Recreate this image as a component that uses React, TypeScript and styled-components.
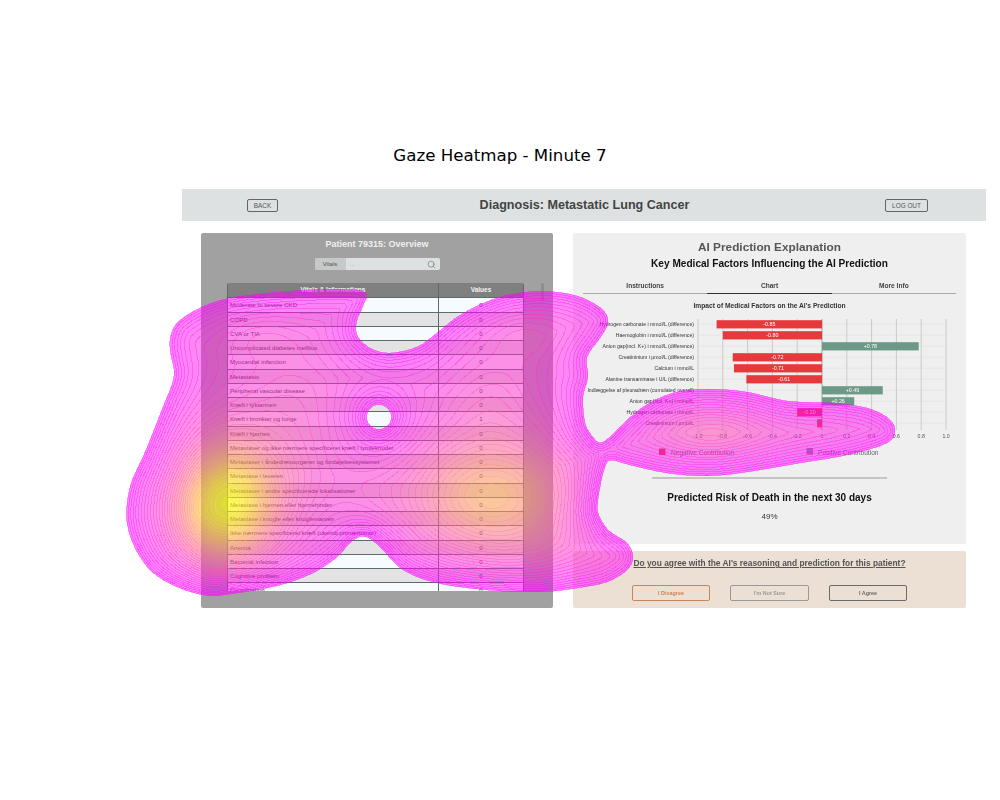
import React, { useMemo } from "react";
import styled, { createGlobalStyle } from "styled-components";
import { Search } from "lucide-react";

const Global = createGlobalStyle`
  html, body { margin: 0; padding: 0; background: #fff; }
  body { font-family: "Liberation Sans", Arial, sans-serif; }
`;

const Page = styled.div`
  position: relative;
  width: 1000px;
  height: 800px;
  overflow: hidden;
  background: #fff;
`;
const FigureTitle = styled.h1`
  margin: 0;
  padding-top: 145px;
  height: 44px;
  box-sizing: content-box;
  line-height: 22px;
  text-align: center;
  font: 400 16.67px/22px "DejaVu Sans", sans-serif;
  color: #000;
`;
const Shot = styled.div`
  margin-left: 182px;
  width: 804px;
  filter: blur(0.45px);
`;
const TopBar = styled.header`
  height: 32px;
  background: #dde1e1;
  display: grid;
  grid-template-columns: 65px 31px 1fr 43px 58px;
  align-items: center;
`;
const BarButton = styled.button<{ $col: number }>`
  grid-column: ${(p) => p.$col};
  height: 13px;
  padding: 0;
  border: 1px solid #666;
  border-radius: 2px;
  background: transparent;
  color: #555;
  font: 400 6.4px "Liberation Sans", sans-serif;
`;
const Diagnosis = styled.h2`
  grid-column: 3;
  margin: 0;
  padding-left: 6px;
  text-align: center;
  font: 700 12.6px "Liberation Sans", sans-serif;
  color: #444;
`;
const Body = styled.div`
  display: flex;
  gap: 20px;
  padding: 12px 20px 0 19px;
`;
const LeftPanel = styled.section`
  width: 352px;
  height: 375px;
  box-sizing: border-box;
  padding-top: 5px;
  background: #a1a1a1;
  border-radius: 2px;
`;
const PatientTitle = styled.h3`
  margin: 0;
  text-align: center;
  font: 700 9px/12px "Liberation Sans", sans-serif;
  color: #efefef;
`;
const SearchBox = styled.div`
  margin: 8px auto 0;
  width: 125px;
  height: 12px;
  display: flex;
  border-radius: 2px;
  overflow: hidden;
  background: #dde0e0;
`;
const SearchLabel = styled.span`
  width: 31px;
  background: #c6c9c9;
  text-align: center;
  color: #555;
  font: 400 6px/12px "Liberation Sans", sans-serif;
`;
const SearchField = styled.span`
  flex: 1;
  display: flex;
  align-items: center;
  justify-content: space-between;
  padding: 0 4px;
  color: #999;
  font: 400 6px/12px "Liberation Sans", sans-serif;
  svg { color: #666; }
`;
const TableArea = styled.div`
  display: flex;
  gap: 17px;
  margin: 13px 0 0 26px;
`;
const Table = styled.div`
  width: 297px;
  height: 308px;
  box-sizing: border-box;
  overflow: hidden;
  border-left: 1px solid #5d6b6b;
  border-right: 1px solid #5d6b6b;
  border-radius: 2px 2px 0 0;
`;
const Row = styled.div<{ $kind: "head" | "odd" | "even" }>`
  display: grid;
  grid-template-columns: 210px 85px;
  height: ${(p) => (p.$kind === "head" ? "15.3px" : "14.25px")};
  box-sizing: border-box;
  border-bottom: 1px solid #5d6b6b;
  background: ${(p) => (p.$kind === "head" ? "#808080" : p.$kind === "odd" ? "#f6fbff" : "#e3e3e3")};
  color: ${(p) => (p.$kind === "head" ? "#f4f4f4" : "#333")};
  font: ${(p) => (p.$kind === "head" ? "700 6.5px/14.3px" : "400 6.1px/13.25px")} "Liberation Sans", sans-serif;
`;
const NameCell = styled.div<{ $center?: boolean }>`
  padding-left: ${(p) => (p.$center ? 0 : "2px")};
  text-align: ${(p) => (p.$center ? "center" : "left")};
  white-space: nowrap;
  overflow: hidden;
`;
const ValueCell = styled.div`
  text-align: center;
  border-left: 1px solid #5d6b6b;
`;
const Thumb = styled.div`
  width: 3px;
  height: 18px;
  background: #8e8e8e;
  border-radius: 1px;
`;
const RightColumn = styled.div`
  width: 393px;
  display: flex;
  flex-direction: column;
  gap: 7px;
`;
const ExplainPanel = styled.section`
  height: 311px;
  box-sizing: border-box;
  padding-top: 6px;
  background: #efefef;
  border-radius: 2px;
  text-align: center;
`;
const ExplainTitle = styled.h3`
  margin: 0;
  font: 700 11.8px/16px "Liberation Sans", sans-serif;
  color: #555;
`;
const ExplainSub = styled.h4`
  margin: 2px 0 0;
  font: 700 10.1px/14px "Liberation Sans", sans-serif;
  color: #111;
`;
const Tabs = styled.div`
  margin: 7px 10px 0;
  display: grid;
  grid-template-columns: repeat(3, 1fr);
  border-bottom: 1px solid #a8a8a8;
`;
const Tab = styled.div<{ $active?: boolean }>`
  height: 15px;
  margin-bottom: -1px;
  box-sizing: content-box;
  border-bottom: 1px solid ${(p) => (p.$active ? "#333" : "transparent")};
  font: 700 6.6px/15px "Liberation Sans", sans-serif;
  color: #444;
`;
const ChartTitle = styled.div`
  margin-top: 7px;
  font: 700 6.7px/10px "Liberation Sans", sans-serif;
  color: #333;
`;
const ChartSvg = styled.svg`
  display: block;
  margin-top: 3px;
  font-family: "Liberation Sans", sans-serif;
`;
const Divider = styled.hr`
  width: 235px;
  height: 1.5px;
  margin: 13px auto 0;
  border: 0;
  background: #c4c4c4;
`;
const RiskTitle = styled.div`
  margin-top: 12px;
  font: 700 10px/13px "Liberation Sans", sans-serif;
  color: #111;
`;
const RiskValue = styled.div`
  margin-top: 7px;
  font: 400 8px/11px "Liberation Sans", sans-serif;
  color: #333;
`;
const AgreePanel = styled.section`
  height: 57px;
  box-sizing: border-box;
  padding-top: 6px;
  background: #ecdfd3;
  border-radius: 2px;
  text-align: center;
`;
const Question = styled.div`
  font: 700 8.4px/13px "Liberation Sans", sans-serif;
  color: #555;
  text-decoration: underline;
`;
const ChoiceRow = styled.div`
  margin-top: 15px;
  display: flex;
  justify-content: center;
  gap: 20px;
`;
const Choice = styled.button<{ $tone: string }>`
  width: 78.5px;
  height: 15.5px;
  padding: 0;
  background: transparent;
  border: 1px solid ${(p) => p.$tone};
  border-radius: 2px;
  color: ${(p) => p.$tone};
  font: 700 5.4px "Liberation Sans", sans-serif;
`;
const Overlay = styled.svg`
  position: absolute;
  left: 0;
  top: 0;
  pointer-events: none;
`;

const ROWS: [string, string][] = [
  ["Moderate to severe CKD", "0"],
  ["COPD", "0"],
  ["CVA or TIA", "0"],
  ["Uncomplicated diabetes mellitus", "0"],
  ["Myocardial infarction", "0"],
  ["Metastasis", "0"],
  ["Peripheral vascular disease", "0"],
  ["Kræft i tyktarmen", "0"],
  ["Kræft i bronkier og lunge", "1"],
  ["Kræft i hjernen", "0"],
  ["Metastaser og ikke nærmere specificeret kræft i lymfeknuder", "0"],
  ["Metastaser i åndedrætsorganer og fordøjelsessystemet", "0"],
  ["Metastase i leveren", "0"],
  ["Metastaser i andre specificerede lokalisationer", "0"],
  ["Metastase i hjernen eller hjernehinder", "0"],
  ["Metastase i knogle eller knoglemarven", "0"],
  ["Ikke nærmere specificeret kræft (ukendt primærtumor)", "0"],
  ["Anemia", "0"],
  ["Bacterial infection", "0"],
  ["Cognitive problem", "0"],
  ["Coordination", "0"],
];

const BARS: [string, number][] = [
  ["Hydrogen carbonate i mmol/L (difference)", -0.85],
  ["Haemoglobin i mmol/L (difference)", -0.8],
  ["Anion gap(incl. K+) i mmol/L (difference)", 0.78],
  ["Creatininium i µmol/L (difference)", -0.72],
  ["Calcium i mmol/L", -0.71],
  ["Alanine transaminase i U/L (difference)", -0.61],
  ["Indlæggelse af pleuradræn (cumulated overall)", 0.49],
  ["Anion gap(incl. K+) i mmol/L", 0.26],
  ["Hydrogen carbonate i mmol/L", -0.2],
  ["Creatininium i µmol/L", -0.04],
];
const TICKS = [-1, -0.8, -0.6, -0.4, -0.2, 0, 0.2, 0.4, 0.6, 0.8, 1];

function Chart() {
  const zero = 249;
  const unit = 124;
  const rowY = (i: number) => 10.3 + 11 * i;
  return (
    <ChartSvg width={393} height={150} viewBox="0 0 393 150">
      {BARS.map((_, i) => (
        <line key={i} x1={zero - unit} x2={zero + unit} y1={rowY(i)} y2={rowY(i)} stroke="#e4e4e2" strokeWidth={0.8} />
      ))}
      {TICKS.map((t) => (
        <line
          key={t}
          x1={zero + t * unit}
          x2={zero + t * unit}
          y1={5}
          y2={116}
          stroke={t === 0 ? "#8fa59a" : "#cbcbc4"}
          strokeWidth={1}
        />
      ))}
      {BARS.map(([name, v], i) => {
        const w = Math.abs(v) * unit;
        const x = v < 0 ? zero - w : zero;
        const label = (v > 0 ? "+" : "") + v.toFixed(2);
        return (
          <g key={name}>
            <text x={121} y={rowY(i) + 1.9} textAnchor="end" fontSize={5.15} fill="#333">{name}</text>
            <rect x={x} y={rowY(i) - 4.1} width={w} height={8.2} fill={v < 0 ? "#e6393c" : "#6d9a86"} />
            {Math.abs(v) > 0.1 && (
              <text x={x + w / 2} y={rowY(i) + 1.9} textAnchor="middle" fontSize={5.3} fill="#fff">{label}</text>
            )}
          </g>
        );
      })}
      {TICKS.map((t) => (
        <text key={t} x={zero + t * unit} y={123.5} textAnchor="middle" fontSize={5.2} fill="#555">
          {t === 0 ? "0" : t.toFixed(1)}
        </text>
      ))}
      <rect x={86} y={134.5} width={6.5} height={6.5} fill="#e6393c" />
      <text x={98} y={140.5} fontSize={6.6} fill="#666">Negative Contribution</text>
      <rect x={233.5} y={134} width={6.5} height={6.5} fill="#6d9a86" />
      <text x={245} y={140.5} fontSize={6.6} fill="#666">Positive Contribution</text>
    </ChartSvg>
  );
}

/* ---------- gaze density ---------- */
type P = [number, number];
const OUTER: P[] = [
  [333, 289], [365, 292], [363, 306], [357, 320], [357, 335], [370, 348], [390, 353], [417, 347], [437, 333],
  [453, 320], [473, 308], [500, 297], [527, 292], [557, 292], [583, 298], [603, 310], [608, 323], [600, 338],
  [587, 357], [588, 377], [583, 397], [585, 423], [592, 436], [600, 443], [610, 437], [620, 427], [643, 407],
  [673, 393], [707, 389], [747, 392], [787, 401], [833, 403], [867, 408], [888, 418], [895, 430], [887, 443],
  [847, 455], [800, 463], [747, 472], [707, 476], [667, 473], [630, 465], [610, 460], [604, 470], [600, 487],
  [598, 500], [598, 513], [608, 530], [627, 543], [633, 557], [627, 570], [607, 582], [577, 588], [540, 592],
  [487, 590], [437, 583], [403, 570], [383, 550], [367, 537], [353, 540], [337, 557], [313, 573], [280, 585],
  [237, 593], [203, 595], [163, 580], [140, 557], [127, 523], [130, 487], [143, 457], [150, 440], [163, 407],
  [174, 377], [171, 355], [170, 340], [177, 323], [200, 308], [230, 298], [280, 292],
];
const HOLE: P[] = Array.from({ length: 20 }, (_, i) => {
  const a = (i / 20) * Math.PI * 2;
  return [379 + 12.5 * Math.cos(a), 417 + 12.5 * Math.sin(a)] as P;
});
const BLOBS: [number, number, number, number, number][] = [
  [228, 505, 36, 48, 0.7],
  [290, 480, 40, 40, 0.1],
  [188, 512, 24, 38, 0.08],
  [492, 497, 62, 46, 0.5],
  [370, 510, 26, 22, 0.06],
  [262, 335, 30, 18, 0.08],
  [525, 332, 36, 20, 0.1],
  [300, 400, 40, 40, 0.1],
  [490, 395, 32, 30, 0.1],
  [710, 432, 42, 20, 0.22],
  [805, 430, 45, 14, 0.06],
  [535, 555, 40, 22, 0.04],
];

function smooth(pts: P[], n: number): P[] {
  const out: P[] = [];
  const N = pts.length;
  for (let i = 0; i < N; i++) {
    const [p0, p1, p2, p3] = [pts[(i - 1 + N) % N], pts[i], pts[(i + 1) % N], pts[(i + 2) % N]];
    for (let k = 0; k < n; k++) {
      const t = k / n;
      const t2 = t * t;
      const t3 = t2 * t;
      const q = (a: number, b: number, c: number, d: number) =>
        0.5 * (2 * b + (c - a) * t + (2 * a - 5 * b + 4 * c - d) * t2 + (3 * b - a - 3 * c + d) * t3);
      out.push([q(p0[0], p1[0], p2[0], p3[0]), q(p0[1], p1[1], p2[1], p3[1])]);
    }
  }
  return out;
}

const X0 = 114;
const Y0 = 279;
const CELL = 3;
const NX = 265;
const NY = 110;

function buildField(loops: P[][]) {
  const segs: number[] = [];
  loops.forEach((l) =>
    l.forEach((p, i) => {
      const q = l[(i + 1) % l.length];
      segs.push(p[0], p[1], q[0], q[1]);
    })
  );
  const f = new Float32Array((NX + 1) * (NY + 1));
  for (let j = 0; j <= NY; j++) {
    const y = Y0 + j * CELL;
    for (let i = 0; i <= NX; i++) {
      const x = X0 + i * CELL;
      let best = 1e12;
      let inside = false;
      for (let s = 0; s < segs.length; s += 4) {
        const ax = segs[s], ay = segs[s + 1], bx = segs[s + 2], by = segs[s + 3];
        const dx = bx - ax, dy = by - ay;
        let t = ((x - ax) * dx + (y - ay) * dy) / (dx * dx + dy * dy || 1);
        t = t < 0 ? 0 : t > 1 ? 1 : t;
        const ex = x - ax - t * dx, ey = y - ay - t * dy;
        const d = ex * ex + ey * ey;
        if (d < best) best = d;
        if (ay > y !== by > y && x < ax + ((y - ay) / (by - ay)) * dx) inside = !inside;
      }
      const dist = Math.sqrt(best) * (inside ? 1 : -1);
      let g = 0.25;
      for (const [cx, cy, sx, sy, amp] of BLOBS) {
        const u = (x - cx) / sx, v = (y - cy) / sy;
        g += amp * Math.exp(-0.5 * (u * u + v * v));
      }
      f[j * (NX + 1) + i] = (1 - Math.exp(-Math.max(dist, -40) / 18)) * g;
    }
  }
  return f;
}

function trace(f: Float32Array, L: number) {
  let fill = "";
  let line = "";
  const W = NX + 1;
  const n = (v: number) => +v.toFixed(1);
  for (let j = 0; j < NY; j++) {
    let run = -1;
    for (let i = 0; i <= NX; i++) {
      const full =
        i < NX && f[j * W + i] >= L && f[j * W + i + 1] >= L && f[(j + 1) * W + i] >= L && f[(j + 1) * W + i + 1] >= L;
      if (full) {
        if (run < 0) run = i;
        continue;
      }
      if (run >= 0) {
        const xa = X0 + run * CELL, xb = X0 + i * CELL, ya = Y0 + j * CELL;
        fill += `M${xa} ${ya}H${xb}V${ya + CELL}H${xa}Z`;
        run = -1;
      }
      if (i === NX) continue;
      const vals = [f[j * W + i], f[j * W + i + 1], f[(j + 1) * W + i + 1], f[(j + 1) * W + i]];
      if (vals.every((v) => v < L)) continue;
      const cx = [i, i + 1, i + 1, i];
      const cy = [j, j, j + 1, j + 1];
      const poly: string[] = [];
      const cross: string[] = [];
      for (let k = 0; k < 4; k++) {
        const a = vals[k], b = vals[(k + 1) % 4];
        const px = X0 + cx[k] * CELL, py = Y0 + cy[k] * CELL;
        if (a >= L) poly.push(px + " " + py);
        if (a >= L !== b >= L) {
          const t = (L - a) / (b - a);
          const qx = X0 + cx[(k + 1) % 4] * CELL, qy = Y0 + cy[(k + 1) % 4] * CELL;
          const s = n(px + (qx - px) * t) + " " + n(py + (qy - py) * t);
          poly.push(s);
          cross.push(s);
        }
      }
      fill += "M" + poly.join("L") + "Z";
      for (let c = 0; c + 1 < cross.length; c += 2) line += "M" + cross[c] + "L" + cross[c + 1];
    }
  }
  return { fill, line };
}

const heat = (L: number) => Math.min(1, Math.pow(Math.max(L, 0), 1.5));
const spring = (t: number, a: number) =>
  `rgba(255,${Math.round(255 * t)},${Math.round(255 * (1 - t))},${a.toFixed(3)})`;

function GazeOverlay() {
  const data = useMemo(() => {
    const f = buildField([smooth(OUTER, 4), HOLE]);
    const STEP = 0.028;
    const traces: { L: number; fill: string; line: string }[] = [];
    for (let L = 0.001; L < 1.2; L += STEP) traces.push({ L, ...trace(f, L) });
    const bands = traces.map((t, i) => {
      const next = traces[i + 1];
      const h = heat(t.L + STEP / 2);
      return { d: t.fill + (next ? next.fill : ""), c: spring(h, 0.5 + 0.14 * h) };
    });
    const lines = traces.map((t) => ({ d: t.line, c: spring(heat(t.L), 0.38) }));
    return { bands, lines };
  }, []);
  return (
    <Overlay width={1000} height={800} viewBox="0 0 1000 800">
      {data.bands.map((l, i) => (
        <path key={i} d={l.d} fill={l.c} fillRule="evenodd" />
      ))}
      {data.lines.map((l, i) => (
        <path key={i} d={l.d} fill="none" stroke={l.c} strokeWidth={1} shapeRendering="crispEdges" />
      ))}
    </Overlay>
  );
}

export default function App() {
  return (
    <Page>
      <Global />
      <FigureTitle>Gaze Heatmap - Minute 7</FigureTitle>
      <Shot>
        <TopBar>
          <BarButton $col={2}>BACK</BarButton>
          <Diagnosis>Diagnosis: Metastatic Lung Cancer</Diagnosis>
          <BarButton $col={4}>LOG OUT</BarButton>
        </TopBar>
        <Body>
          <LeftPanel>
            <PatientTitle>Patient 79315: Overview</PatientTitle>
            <SearchBox>
              <SearchLabel>Vitals</SearchLabel>
              <SearchField>
                ...
                <Search size={9} strokeWidth={1.5} />
              </SearchField>
            </SearchBox>
            <TableArea>
              <Table>
                <Row $kind="head">
                  <NameCell $center>Vitals &amp; Informations</NameCell>
                  <ValueCell>Values</ValueCell>
                </Row>
                {ROWS.map(([name, value], i) => (
                  <Row key={name} $kind={i % 2 === 0 ? "odd" : "even"}>
                    <NameCell>{name}</NameCell>
                    <ValueCell>{value}</ValueCell>
                  </Row>
                ))}
              </Table>
              <Thumb />
            </TableArea>
          </LeftPanel>
          <RightColumn>
            <ExplainPanel>
              <ExplainTitle>AI Prediction Explanation</ExplainTitle>
              <ExplainSub>Key Medical Factors Influencing the AI Prediction</ExplainSub>
              <Tabs>
                <Tab>Instructions</Tab>
                <Tab $active>Chart</Tab>
                <Tab>More Info</Tab>
              </Tabs>
              <ChartTitle>Impact of Medical Factors on the AI's Prediction</ChartTitle>
              <Chart />
              <Divider />
              <RiskTitle>Predicted Risk of Death in the next 30 days</RiskTitle>
              <RiskValue>49%</RiskValue>
            </ExplainPanel>
            <AgreePanel>
              <Question>Do you agree with the AI's reasoning and prediction for this patient?</Question>
              <ChoiceRow>
                <Choice $tone="#c98552">I Disagree</Choice>
                <Choice $tone="#999">I'm Not Sure</Choice>
                <Choice $tone="#6b6b6b">I Agree</Choice>
              </ChoiceRow>
            </AgreePanel>
          </RightColumn>
        </Body>
      </Shot>
      <GazeOverlay />
    </Page>
  );
}
